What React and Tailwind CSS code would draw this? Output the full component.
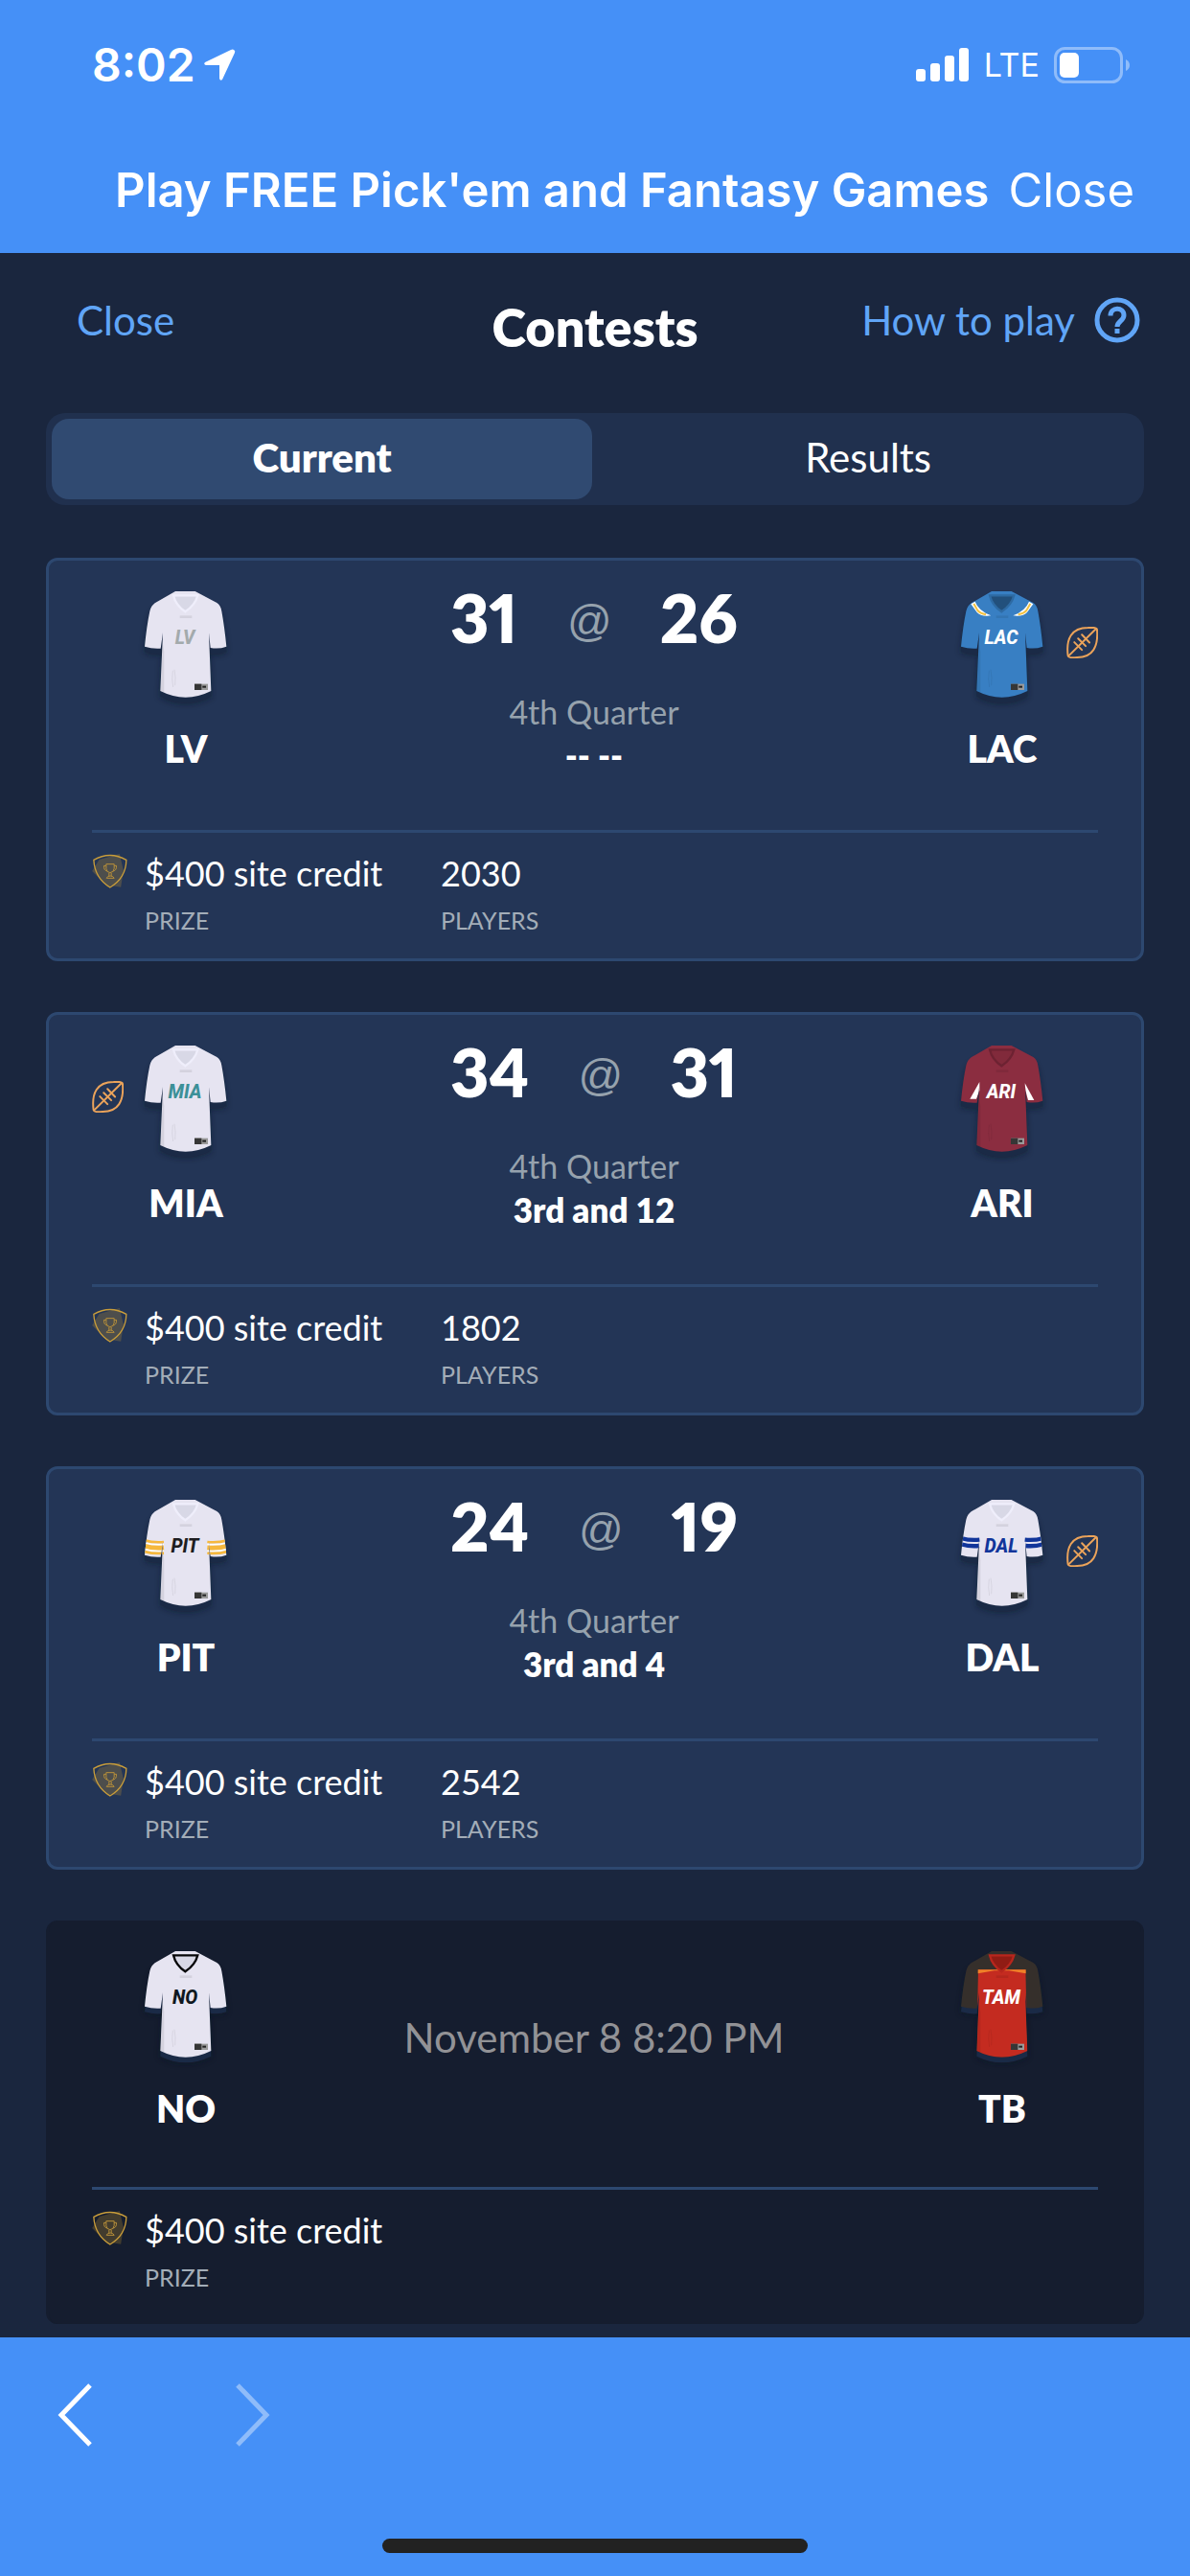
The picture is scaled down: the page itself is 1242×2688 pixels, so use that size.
const JERSEY =
  'M96 0H158L226 36Q238 44 241 62Q250 112 256 173Q232 182 206 177L201 130L208 312Q128 352 49 312L57 130L50 179Q24 181 0 173Q6 110 16 62Q20 46 32 37Z';

const TEAMS = {
  LV: { base: '#e6e4f1', collar: '#efeefb', inner: '#d8d8e6', ink: '#a3aaac', text: 'LV' },
  LAC: { base: '#387fc3', collar: '#2e6ba4', inner: '#22507c', ink: '#ffffff', text: 'LAC', art: 'bolts' },
  MIA: { base: '#e6e4f1', collar: '#efeefb', inner: '#d8d8e6', ink: '#3c9098', text: 'MIA' },
  ARI: { base: '#8b2d40', collar: '#6d2232', inner: '#812a3b', ink: '#ffffff', text: 'ARI', art: 'wedges' },
  PIT: { base: '#e6e4f1', collar: '#efeefb', inner: '#d8d8e6', ink: '#1d1d20', text: 'PIT', art: 'gold' },
  DAL: { base: '#e6e4f1', collar: '#efeefb', inner: '#d8d8e6', ink: '#11359a', text: 'DAL', art: 'blue' },
  NO: { base: '#e6e4f1', collar: '#060608', inner: '#d8d8e6', ink: '#101820', text: 'NO' },
  TB: { base: '#352f2b', collar: '#b8261d', inner: '#901c14', ink: '#ffffff', text: 'TAM', art: 'yoke' },
};

function JerseyArt({ kind }) {
  if (kind === 'bolts') {
    const bolt = (
      <>
        <path d="M31 40L44 32Q54 60 94 76Q62 80 50 66Z" fill="#fff" />
        <path d="M40 39L52 60Q60 69 78 73" fill="none" stroke="#f2c141" strokeWidth="6" />
      </>
    );
    return (
      <>
        {bolt}
        <g transform="matrix(-1 0 0 1 257 0)">{bolt}</g>
      </>
    );
  }
  if (kind === 'wedges')
    return (
      <g fill="#fff">
        <path d="M58 114V140L48 167H28Z" />
        <path d="M200 118L229 171H210L202 140Z" />
      </g>
    );
  if (kind === 'gold')
    return (
      <g fill="none">
        {['M0 127Q28 135 60 132', 'M258 127Q230 135 196 132'].map((d) => (
          <g key={d}>
            <path d={d} stroke="#f6b83c" strokeWidth="8" />
            <path d={d} transform="translate(0 8)" stroke="#fff" strokeWidth="5" />
            <path d={d} transform="translate(0 18)" stroke="#f6b83c" strokeWidth="15" />
            <path d={d} transform="translate(0 28)" stroke="#fff" strokeWidth="5" />
            <path d={d} transform="translate(0 35)" stroke="#f6b83c" strokeWidth="8" />
          </g>
        ))}
      </g>
    );
  if (kind === 'blue')
    return (
      <g fill="none" stroke="#11359a" strokeWidth="13">
        <path d="M0 120Q28 128 58 125M0 139Q28 147 57 144" />
        <path d="M258 120Q230 128 200 125M258 139Q230 147 202 144" />
      </g>
    );
  if (kind === 'yoke')
    return (
      <>
        <path d="M54 58H202L209 350H48Z" fill="#c42b20" />
        <path d="M53 58H203V70L150 61H104L53 70Z" fill="#ef8128" />
      </>
    );
  return null;
}

function Jersey({ code }) {
  const t = TEAMS[code];
  const clip = `jersey-${code}`;
  return (
    <svg viewBox="0 0 258 360" className="h-[120px] w-[86px] overflow-visible" role="img" aria-label={`${code} jersey`}>
      <defs>
        <clipPath id={clip}>
          <path d={JERSEY} />
        </clipPath>
        <filter id={`${clip}-blur`} x="-20%" y="-20%" width="140%" height="140%">
          <feGaussianBlur stdDeviation="9" />
        </filter>
      </defs>
      <path d={JERSEY} transform="translate(0 20)" fill="#0b1424" opacity="0.55" filter={`url(#${clip}-blur)`} />
      <path d={JERSEY} transform="translate(0 17)" fill="#1a2a46" />
      <path d={JERSEY} fill={t.base} />
      <g clipPath={`url(#${clip})`}>
        <JerseyArt kind={t.art} />
        <path d="M49 312L57 165L61 190V320Z" fill="#000" opacity="0.08" />
      </g>
      <path d="M90 13H166Q158 44 127 64Q97 44 90 13Z" fill={t.inner} stroke={t.collar} strokeWidth="7" />
      <rect x="110" y="76" width="38" height="8" fill="#000" opacity="0.08" />
      <path d="M88 248Q84 275 89 300M93 245Q98 270 95 295" fill="none" stroke="#000" strokeOpacity="0.1" strokeWidth="2" />
      <rect x="156" y="290" width="42" height="19" fill="#9a9a9a" />
      <rect x="156" y="290" width="22" height="19" fill="#363636" />
      <rect x="181" y="296" width="11" height="6" fill="#222" />
      <text
        x="126"
        y="164"
        textAnchor="middle"
        fontFamily="Roboto, sans-serif"
        fontStyle="italic"
        fontWeight="800"
        fontSize="58"
        fill={t.ink}
      >
        {t.text}
      </text>
    </svg>
  );
}

function Football() {
  return (
    <svg viewBox="0 0 100 100" className="size-[33px]" fill="none" stroke="#eba35a" strokeWidth="6" strokeLinecap="round" role="img" aria-label="Possession">
      <path d="M5 92C-2 38 16 3 68 3C88 2 97 3 97 10C101 62 84 97 34 97C14 99 6 98 5 92Z" />
      <path d="M7 92L94 6" />
      <path d="M49 25L73 50M37 37L61 61M25 49L49 73" />
    </svg>
  );
}

function PrizeShield() {
  return (
    <svg viewBox="0 0 110 108" className="h-[36px] w-[37px]" fill="none" aria-hidden="true">
      <path d="M0 54L22 18L86 0L98 52L90 104L62 100L50 104Z" fill="#d6a02f" opacity="0.24" />
      <path d="M5 19Q56 -10 107 19Q106 76 56 105Q8 76 5 19Z" stroke="#c99d3a" strokeWidth="4" />
      <g stroke="#b8903a" strokeWidth="3">
        <path d="M44 32H69V46Q68 58 56 59Q45 58 44 46Z" />
        <path d="M44 37H37Q36 52 47 54M69 37H76Q77 52 66 54M53 60V69M60 60V69M45 76Q48 69 57 69Q66 69 69 76Z" />
      </g>
    </svg>
  );
}

function Team({ code, ball, side }) {
  const slot = <div className="w-[33px] pt-[37px]">{ball && <Football />}</div>;
  return (
    <div className={`flex pt-2 ${side === 'left' ? 'gap-[22px]' : 'gap-6'}`}>
      {side === 'left' && slot}
      <div className="flex w-[86px] flex-col items-center gap-5">
        <Jersey code={code} />
        <span className="text-[39px] leading-[48px] font-extrabold">{code}</span>
      </div>
      {side === 'right' && slot}
    </div>
  );
}

function ContestCard({ away, home, ball, scores, period, detail, start, players }) {
  const live = Boolean(scores);
  return (
    <article
      className={`rounded-xl px-[45px] pt-6 ${
        live ? 'border-[3px] border-[#2d4870] bg-[#233556] pb-6' : 'border-x-[3px] border-[#151d2f] bg-[#151d2f] pb-[33px]'
      }`}
    >
      <div className={`flex justify-between ${live ? 'pb-[55px]' : 'pb-[58px]'}`}>
        <Team code={away} ball={ball === away} side="left" />
        {live ? (
          <div className="flex flex-col items-center">
            <div className="flex w-[300px] items-end justify-between text-[70px] leading-[70px] font-extrabold proportional-nums">
              <span>{scores[0]}</span>
              <span className="font-['Liberation_Sans',sans-serif] text-[46px] leading-[62px] font-normal text-[#96a2ad] italic">@</span>
              <span>{scores[1]}</span>
            </div>
            <p className="mt-[42px] text-[34px] leading-[44px] text-[#96a2ad]">{period}</p>
            <p className="text-[35px] leading-[46px] font-extrabold">{detail}</p>
          </div>
        ) : (
          <p className="self-center text-[42px] leading-[48px] text-[#929296]">{start}</p>
        )}
        <Team code={home} ball={ball === home} side="right" />
      </div>
      <dl className="flex border-t-[3px] border-[#2d4870] pt-[22px]">
        <div className="mr-[18px]">
          <PrizeShield />
        </div>
        <div className="flex w-[309px] flex-col-reverse gap-[13px]">
          <dt className="text-[25px] leading-8 text-[#a3adb8]">PRIZE</dt>
          <dd className="text-[36px] leading-10">$400 site credit</dd>
        </div>
        {players && (
          <div className="flex flex-col-reverse gap-[13px]">
            <dt className="text-[25px] leading-8 text-[#a3adb8]">PLAYERS</dt>
            <dd className="text-[36px] leading-10">{players}</dd>
          </div>
        )}
      </dl>
    </article>
  );
}

const CONTESTS = [
  { away: 'LV', home: 'LAC', ball: 'LAC', scores: [31, 26], period: '4th Quarter', detail: '-- --', players: 2030 },
  { away: 'MIA', home: 'ARI', ball: 'MIA', scores: [34, 31], period: '4th Quarter', detail: '3rd and 12', players: 1802 },
  { away: 'PIT', home: 'DAL', ball: 'DAL', scores: [24, 19], period: '4th Quarter', detail: '3rd and 4', players: 2542 },
  { away: 'NO', home: 'TB', start: 'November 8 8:20 PM' },
];

function StatusBar() {
  return (
    <div className="flex items-center justify-between pt-10 pr-[60px] pl-24">
      <div className="flex items-center gap-2">
        <span className="text-[48px] leading-[56px] font-semibold">8:02</span>
        <svg viewBox="0 0 34 34" className="size-[34px]" fill="#fff" aria-hidden="true">
          <path d="M32 1Q34 2 33 4L20 32Q18 34 17 31V17H3Q0 16 2 14L29 1Q31 0 32 1Z" />
        </svg>
      </div>
      <div className="flex items-center gap-[15px]">
        <svg viewBox="0 0 56 36" className="h-9 w-14" fill="#fff" aria-hidden="true">
          <rect x="0" y="22" width="10" height="13" rx="3" />
          <rect x="15" y="16" width="10" height="19" rx="3" />
          <rect x="30" y="8" width="10" height="27" rx="3" />
          <rect x="45" y="0" width="10" height="35" rx="3" />
        </svg>
        <span className="text-[34px] leading-[56px]">LTE</span>
        <svg viewBox="0 0 82 38" className="h-[38px] w-[82px]" fill="none" aria-hidden="true">
          <rect x="1.5" y="1.5" width="69" height="35" rx="10" stroke="#8fbcfa" strokeWidth="3" />
          <rect x="6" y="6" width="20" height="26" rx="5" fill="#fff" />
          <path d="M75 13Q79 15 79 19Q79 23 75 25Z" fill="#8fbcfa" />
        </svg>
      </div>
    </div>
  );
}

export default function App() {
  return (
    <div className="flex min-h-screen flex-col bg-[#1a263e] font-[Lato,sans-serif] text-white">
      <header className="bg-[#4590f7] pb-[34px] font-[Inter,sans-serif]">
        <StatusBar />
        <div className="mt-[72px] flex items-center justify-end gap-5 pr-[58px] whitespace-nowrap">
          <h1 className="text-[49px] leading-[62px] font-semibold">Play FREE Pick&apos;em and Fantasy Games</h1>
          <button type="button" className="text-[49px] leading-[62px]">Close</button>
        </div>
      </header>

      <main className="flex-1 px-12 pb-[14px]">
        <div className="grid grid-cols-[1fr_auto_1fr] items-start pt-[46px]">
          <button type="button" className="justify-self-start pl-8 text-[42px] leading-[48px] text-[#60a5f7]">Close</button>
          <h2 className="pt-1 text-[54px] leading-[56px] font-extrabold">Contests</h2>
          <a href="#how-to-play" className="flex items-center gap-5 justify-self-end pr-1 text-[42px] leading-[48px] text-[#60a5f7]">
            How to play
            <svg viewBox="0 0 48 48" className="size-12" fill="none" stroke="currentColor" strokeWidth="5" aria-hidden="true">
              <circle cx="24" cy="24" r="21" />
              <path d="M17 19.500C17 10 31 10 31 19C31 25 24 25 24 31" />
              <path d="M24 33V38" />
            </svg>
          </a>
        </div>

        <div role="tablist" className="mt-[61px] grid grid-cols-[49fr_50fr] rounded-[20px] bg-[#20304e] py-[6px] pl-[6px]">
          <button type="button" role="tab" aria-selected="true" className="rounded-[18px] bg-[#304a71] pb-1 text-[42px] leading-[80px] font-extrabold">
            Current
          </button>
          <button type="button" role="tab" aria-selected="false" className="pb-1 text-[42px] leading-[80px]">
            Results
          </button>
        </div>

        <div className="mt-[55px] flex flex-col gap-[53px]">
          {CONTESTS.map((c) => (
            <ContestCard key={c.away} {...c} />
          ))}
        </div>
      </main>

      <footer className="flex flex-col items-center bg-[#4590f7] pb-6">
        <nav className="flex w-full gap-[150px] px-[60px] pt-12">
          <button type="button" aria-label="Back">
            <svg viewBox="0 0 36 66" className="h-[66px] w-9" fill="none" stroke="#fff" strokeWidth="5">
              <path d="M34 2L4 33L34 64" />
            </svg>
          </button>
          <button type="button" aria-label="Forward" disabled>
            <svg viewBox="0 0 36 66" className="h-[66px] w-9" fill="none" stroke="#8fbcfa" strokeWidth="5">
              <path d="M2 2L32 33L2 64" />
            </svg>
          </button>
        </nav>
        <div className="mt-24 h-[15px] w-[444px] rounded-full bg-[#222]" />
      </footer>
    </div>
  );
}
